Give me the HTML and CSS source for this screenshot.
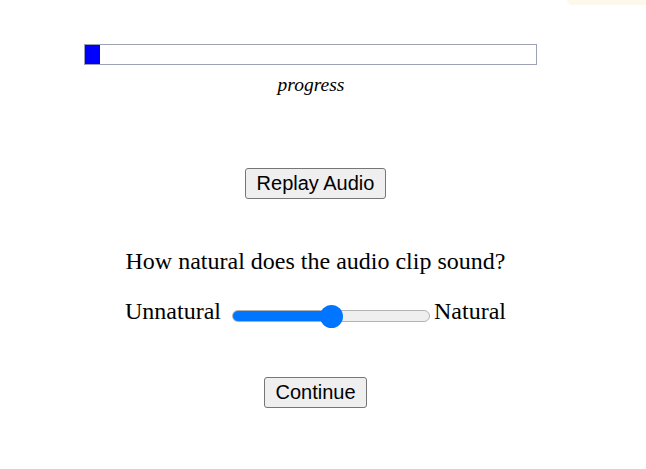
FILE: index.html
```html
<!DOCTYPE html>
<html>
<head>
<meta charset="utf-8">
<link rel="stylesheet" href="styles.css">
</head>
<body>
<div class="corner"></div>
<main class="page">
  <div class="progress-wrap">
    <div class="progress-bar"><div class="progress-fill" style="width:15px"></div></div>
    <div class="progress-label">progress</div>
  </div>
  <div class="center">
    <button class="btn replay">Replay Audio</button>
  </div>
  <div class="question">How natural does the audio clip sound?</div>
  <div class="scale-row">
    <span class="scale-label">Unnatural</span>
    <input class="slider" type="range" min="0" max="100" value="50">
    <span class="scale-label">Natural</span>
  </div>
  <div class="center">
    <button class="btn continue">Continue</button>
  </div>
</main>
</body>
</html>
```
FILE: styles.css
```css
html, body {
  margin: 0;
  padding: 0;
  background: #fff;
}
body {
  font-family: "Liberation Serif", "Times New Roman", serif;
  color: #000;
  width: 646px;
  height: 469px;
  overflow: hidden;
  position: relative;
}
.corner {
  position: absolute;
  top: -6px;
  left: 567px;
  width: 90px;
  height: 11px;
  border-radius: 6px;
  background: #fdf8ec;
}
.page {
  width: 631px;
  display: flex;
  flex-direction: column;
}
.progress-wrap {
  margin-top: 44px;
  padding-left: 84px;
  width: 453px;
  display: flex;
  flex-direction: column;
}
.progress-bar {
  box-sizing: border-box;
  width: 453px;
  height: 21px;
  border: 1px solid #9ea1b4;
  background: #fff;
}
.progress-fill {
  height: 100%;
  background: #0000ff;
}
.progress-label {
  text-align: center;
  font-style: italic;
  font-size: 19.5px;
  line-height: 22px;
  margin-top: 9px;
  padding-left: 1px;
}
.center {
  display: flex;
  justify-content: center;
}
.btn {
  font-family: "Liberation Sans", Arial, sans-serif;
  font-size: 20px;
  color: #000;
  background: #efefef;
  border: 1px solid #767676;
  border-radius: 3px;
  padding: 0 10px;
  height: 31px;
  line-height: 29px;
  margin: 0;
}
.replay {
  margin-top: 72px;
  width: 141px;
}
.continue {
  width: 103px;
  margin-top: 52px;
}
.question {
  text-align: center;
  font-size: 24px;
  line-height: 28px;
  margin-top: 48px;
}
.scale-row {
  display: flex;
  justify-content: center;
  align-items: center;
  margin-top: 22px;
  font-size: 24px;
  line-height: 28px;
}
.slider {
  -webkit-appearance: none;
  appearance: none;
  width: 198px;
  height: 12px;
  margin: 10px 4px 0 11px;
  padding: 0;
  box-sizing: border-box;
  border: 1px solid #b2b2b2;
  border-radius: 6px;
  background: linear-gradient(to right, #0075ff 0, #0075ff 50%, #efefef 50%, #efefef 100%);
  outline: none;
}
.slider::-webkit-slider-thumb {
  -webkit-appearance: none;
  appearance: none;
  width: 23px;
  height: 23px;
  border-radius: 50%;
  background: #0075ff;
  border: none;
}
```
